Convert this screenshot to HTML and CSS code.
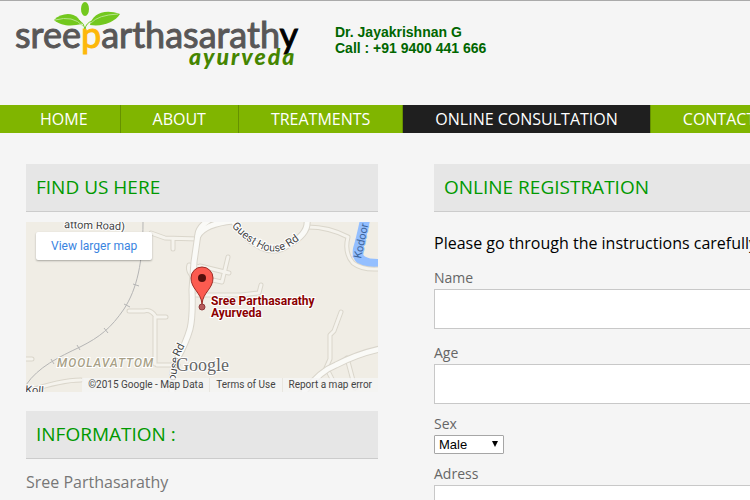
FILE: index.html
```html
<!DOCTYPE html>
<html lang="en">
<head>
<meta charset="utf-8">
<title>Sree Parthasarathy Ayurveda - Online Consultation</title>
<link rel="stylesheet" href="styles.css">
</head>
<body>
<header class="header">
  <a class="logo" href="#" aria-label="Sree Parthasarathy Ayurveda">
    <svg width="320" height="80" viewBox="0 0 320 80" aria-hidden="true">
      <text class="logo-name" x="15" y="48">sree<tspan class="logo-p">p</tspan>arthasarath<tspan class="logo-y">y</tspan></text>
      <text class="logo-sub" x="189" y="65">ayurveda</text>
      <g class="leaf">
        <ellipse cx="85" cy="9" rx="4" ry="7"/>
        <path d="M54 20C61 13 72 12 78 18L82 24C73 26 62 27 54 20Z"/>
        <path d="M90 25C92 15 103 8 120 14C115 22 103 27 90 25Z"/>
      </g>
      <path class="leaf-vein" d="M55 20Q73 15 83 26M118 14Q98 15 91 23"/>
      <path class="leaf-stem" d="M79 20Q84 23 85 29Q86 23 92 21"/>
    </svg>
  </a>
  <p class="contact">Dr. Jayakrishnan G<br>Call : +91 9400 441 666</p>
</header>

<nav class="nav">
  <a href="#">HOME</a>
  <a href="#">ABOUT</a>
  <a href="#">TREATMENTS</a>
  <a class="active" href="#">ONLINE CONSULTATION</a>
  <a href="#">CONTACT</a>
</nav>

<main class="content">
  <aside class="sidebar">
    <h2 class="title">FIND US HERE</h2>
    <div class="map">
      <svg class="map-art" viewBox="0 0 352 170" preserveAspectRatio="xMidYMid slice" role="img" aria-label="Map">
        <defs>
          <g id="lanes">
            <path d="M125 11L139 16L172 17M147 17V27M175 45L163 43Q161 48 166 54"/>
            <path d="M103 89H118Q125 87 130 95H140M129 95V142M131 143H152M0 137H6"/>
            <path d="M174 44L203 51M177 56L196 60L202 35M166 73L215 73L233 71L235 63"/>
            <path d="M282 5Q303 5 322 15Q318 31 327 41Q336 48 352 47"/>
            <path d="M315 90L308 109L304 113V137L300 146M303 151L308 161M321 136L329 166"/>
            <path d="M0 170Q34 158 55 158"/>
          </g>
          <g id="roads">
            <path d="M183 -2Q173 5 172 12L168 40L166 68Q167 95 164 107Q160 121 151 137Q145 149 146 170"/>
            <path d="M172 14Q178 2 207 -1Q219 17 235 25Q250 32 262 23Q283 12 281 -2"/>
            <path d="M278 170Q294 149 310 143Q331 132 354 127"/>
          </g>
          <path id="guest" d="M204 3Q220 20 235 27Q250 33 263 25Q276 17 282 10"/>
        </defs>
        <path class="river" d="M339 -2Q335 17 332 27Q329 43 355 42"/>
        <use href="#lanes" class="lane-edge"/><use href="#lanes" class="lane"/>
        <use href="#roads" class="road-edge"/><use href="#roads" class="road"/>
        <path class="rail" d="M117 0C117 40 111 67 98 87C85 106 74 115 54 125C33 135 12 145 0 163"/>
        <path class="rail" d="M107 62L113 64M98 82L104 85M78 106L82 111M51 123L54 128M25 137L28 142"/>
        <text class="street" x="38" y="6" transform="rotate(2 38 6)">attom Road)</text>
        <text class="street"><textPath href="#guest" startOffset="2">Guest House Rd</textPath></text>
        <text class="street" transform="translate(148 167) rotate(-81)">House</text>
        <text class="street" transform="translate(153 135) rotate(-64)">Rd</text>
        <text class="street" x="-1" y="171" transform="rotate(5 0 171)">Koll</text>
        <text class="street water" transform="translate(335 37) rotate(-78)">Kodoor</text>
        <text class="area" x="31" y="145">MOOLAVATTOM</text>
        <text class="google" x="150" y="149">Google</text>
        <circle class="pin-spot" cx="176" cy="85" r="3"/>
        <path class="pin" d="M176 82C175 70 165 67 165 56A11 11 0 0 1 187 56C187 67 177 70 176 82Z"/>
        <circle class="pin-hole" cx="176" cy="56" r="4"/>
        <text class="place" x="185" y="83">Sree Parthasarathy</text>
        <text class="place" x="185" y="95">Ayurveda</text>
      </svg>
      <a class="map-larger" href="#">View larger map</a>
      <div class="map-terms"><a href="#">©2015 Google - Map Data</a><a href="#">Terms of Use</a><a href="#">Report a map error</a></div>
    </div>
    <h2 class="title">INFORMATION :</h2>
    <p class="info">Sree Parthasarathy</p>
  </aside>

  <section class="registration">
    <h2 class="title">ONLINE REGISTRATION</h2>
    <p class="intro">Please go through the instructions carefully</p>
    <form>
      <div class="field field-spaced"><label for="name">Name</label><input id="name" type="text"></div>
      <div class="field"><label for="age">Age</label><input id="age" type="text"></div>
      <div class="field"><label for="sex">Sex</label>
        <div class="select"><select id="sex"><option>Male</option><option>Female</option></select></div>
      </div>
      <div class="field"><label for="address">Adress</label><input id="address" type="text"></div>
    </form>
  </section>
</main>
</body>
</html>
```
FILE: styles.css
```css
* { box-sizing: border-box; }

html, body { overflow: hidden; }

body {
  margin: 0;
  background: #f5f5f5;
  border-top: 1px solid #aaa;
  color: #777;
  font-family: "Open Sans", sans-serif;
  font-size: 16px;
}

a { text-decoration: none; }

.header {
  display: flex;
  gap: 15px;
  height: 104px;
}

.logo svg { display: block; margin-top: -1px; }
.logo-name { font: 36px Lato, sans-serif; fill: #595757; stroke: #595757; stroke-width: 1px; }
.logo-p { fill: #fdb80a; stroke: #fdb80a; }
.logo-y { fill: #000; stroke: #000; }
.logo-sub { font: italic 900 23px Lato, sans-serif; fill: #458500; letter-spacing: 2px; }
.leaf { fill: #73c81e; }
.leaf-vein { fill: none; stroke: #b6e38a; stroke-width: 1px; }
.leaf-stem { fill: none; stroke: #73c81e; stroke-width: 1px; }

.contact {
  margin: 23px 0 0;
  color: #060;
  font: bold 14px/16px "Liberation Sans", Arial, sans-serif;
}

.nav {
  display: flex;
  padding-left: 8px;
  background: #80b500;
  line-height: 28px;
}

.nav a {
  flex: none;
  padding: 0 32px;
  border-right: 1px solid #669100;
  color: #fff;
}

.nav .active { background: #1f1f1f; }

.content {
  display: flex;
  gap: 56px;
  padding: 31px 0 0 26px;
}

.sidebar { flex: 0 0 352px; }
.registration { flex: 1 0 560px; }

.title {
  margin: 0;
  padding: 0 10px;
  background: #e6e6e6;
  border-bottom: 1px solid #ccc;
  color: #090;
  font-size: 19px;
  font-weight: 400;
  line-height: 47px;
}

.map {
  position: relative;
  height: 170px;
  margin: 10px 0 19px;
  overflow: hidden;
  background: #f0ede5;
  font-family: Roboto, sans-serif;
}

.map-art { display: block; width: 100%; height: 100%; }
.river { fill: none; stroke: #94bfff; stroke-width: 10px; }
.lane-edge, .lane, .road-edge, .road { fill: none; stroke-linecap: round; stroke-linejoin: round; }
.lane-edge { stroke: #dad6cb; stroke-width: 5px; }
.lane { stroke: #f5f3ed; stroke-width: 3px; }
.road-edge { stroke: #d9d5cb; stroke-width: 7px; }
.road { stroke: #fafaf7; stroke-width: 5px; }
.rail { fill: none; stroke: #b5b5b5; stroke-width: 1px; }
.street { font-size: 11px; fill: #444; stroke: #fff; stroke-width: 2px; paint-order: stroke; }
.water { fill: #3d659c; stroke: #94bfff; }
.area { font-size: 12px; font-style: italic; font-weight: 500; letter-spacing: 1px; fill: #a89f86; stroke: #fff; stroke-width: 2px; paint-order: stroke; }
.google { font: 18px "Liberation Serif", serif; fill: #666; stroke: #fff; stroke-width: 2px; paint-order: stroke; }
.place { font-size: 12px; font-weight: 700; fill: #8b0000; stroke: #fff; stroke-width: 2px; paint-order: stroke; }
.pin { fill: #fc5b50; stroke: #9d2d27; stroke-width: 1px; }
.pin-hole { fill: #55100d; }
.pin-spot { fill: #b65a5a; stroke: #8d3a3a; stroke-width: 1px; }

.map-larger {
  position: absolute;
  top: 10px;
  left: 10px;
  padding: 0 15px;
  border-radius: 2px;
  background: #fff;
  box-shadow: 0 1px 2px rgba(0, 0, 0, 0.3);
  color: #3a84df;
  font-size: 12px;
  line-height: 28px;
}

.map-terms {
  position: absolute;
  right: 0;
  bottom: 0;
  display: flex;
  background: rgba(245, 245, 245, 0.8);
  font-size: 10px;
  line-height: 14px;
}

.map-terms a { padding: 0 6px; color: #444; white-space: nowrap; }
.map-terms a + a { border-left: 1px solid #e8e6e0; }

.info { margin: 12px 0 0; line-height: 22px; }

.intro {
  margin: 20px 0 13px;
  color: #000;
  line-height: 22px;
  white-space: nowrap;
}

.field { margin-bottom: 9px; }
.field-spaced { margin-bottom: 13px; }

.field label {
  display: block;
  color: #666;
  font-size: 14px;
  line-height: 22px;
}

.field input {
  display: block;
  width: 100%;
  height: 40px;
  padding: 0 10px;
  border: 1px solid #c8c8c8;
  background: #fff;
  font: inherit;
}

.select { position: relative; width: 70px; }

.select::after {
  content: "";
  position: absolute;
  top: 6px;
  right: 6px;
  border: 3px solid transparent;
  border-top: 6px solid #000;
  border-bottom: 0;
  pointer-events: none;
}

.select select {
  display: block;
  width: 100%;
  height: 19px;
  padding: 0 4px;
  appearance: none;
  border: 1px solid #a6a6a6;
  border-radius: 1px;
  background: #fff;
  color: #000;
  font: 13px "Liberation Sans", Arial, sans-serif;
}
```
